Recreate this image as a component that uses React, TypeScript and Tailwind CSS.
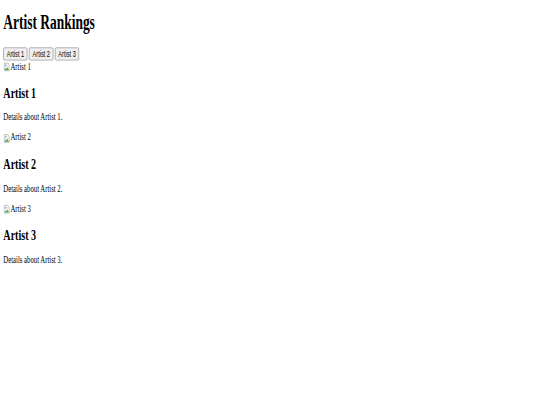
const artists = [
  { id: 1, name: 'Artist 1', details: 'Details about Artist 1.' },
  { id: 2, name: 'Artist 2', details: 'Details about Artist 2.' },
  { id: 3, name: 'Artist 3', details: 'Details about Artist 3.' },
];

const BrokenImage = ({ alt }: { alt: string }) => (
  <span className="inline-flex items-end">
    <svg width="16" height="16" viewBox="0 0 16 16" className="mr-[1px]">
      <path d="M2 2h9l3 3v9H2z" fill="#f4f4f4" stroke="#9a9a9a" strokeWidth="1" />
      <path d="M3 13l3-4 2 2 2-3 3 5z" fill="#4caf50" />
      <circle cx="6" cy="5.5" r="1.3" fill="#4f8fd6" />
    </svg>
    <span>{alt}</span>
  </span>
);

export default function App() {
  return (
    <div className="w-[540px] h-[405px] overflow-hidden bg-white">
      <div
        className="w-[1280px] origin-top-left scale-x-[0.42] scale-y-[0.65] p-[8px] text-black text-[16px] leading-[1.15]"
        style={{ fontFamily: '"Liberation Serif", "Times New Roman", serif' }}
      >
        <h1 className="text-[32px] font-bold mt-[7px] mb-[21.44px]">Artist Rankings</h1>
        <div className="flex gap-[4px]">
          {artists.map((a) => (
            <button
              key={a.id}
              className="px-[7px] py-[1px] border border-[#767676] rounded-[3px] bg-[#efefef] text-[13.33px] leading-[1.15] text-black"
              style={{ fontFamily: '"Liberation Sans", Arial, sans-serif' }}
            >
              {a.name}
            </button>
          ))}
        </div>
        {artists.map((a) => (
          <div key={a.id}>
            <BrokenImage alt={a.name} />
            <h2 className="text-[24px] font-bold mt-[14px] mb-[14px]">{a.name}</h2>
            <p className="mt-[14px] mb-[13px]">{a.details}</p>
          </div>
        ))}
      </div>
    </div>
  );
}
